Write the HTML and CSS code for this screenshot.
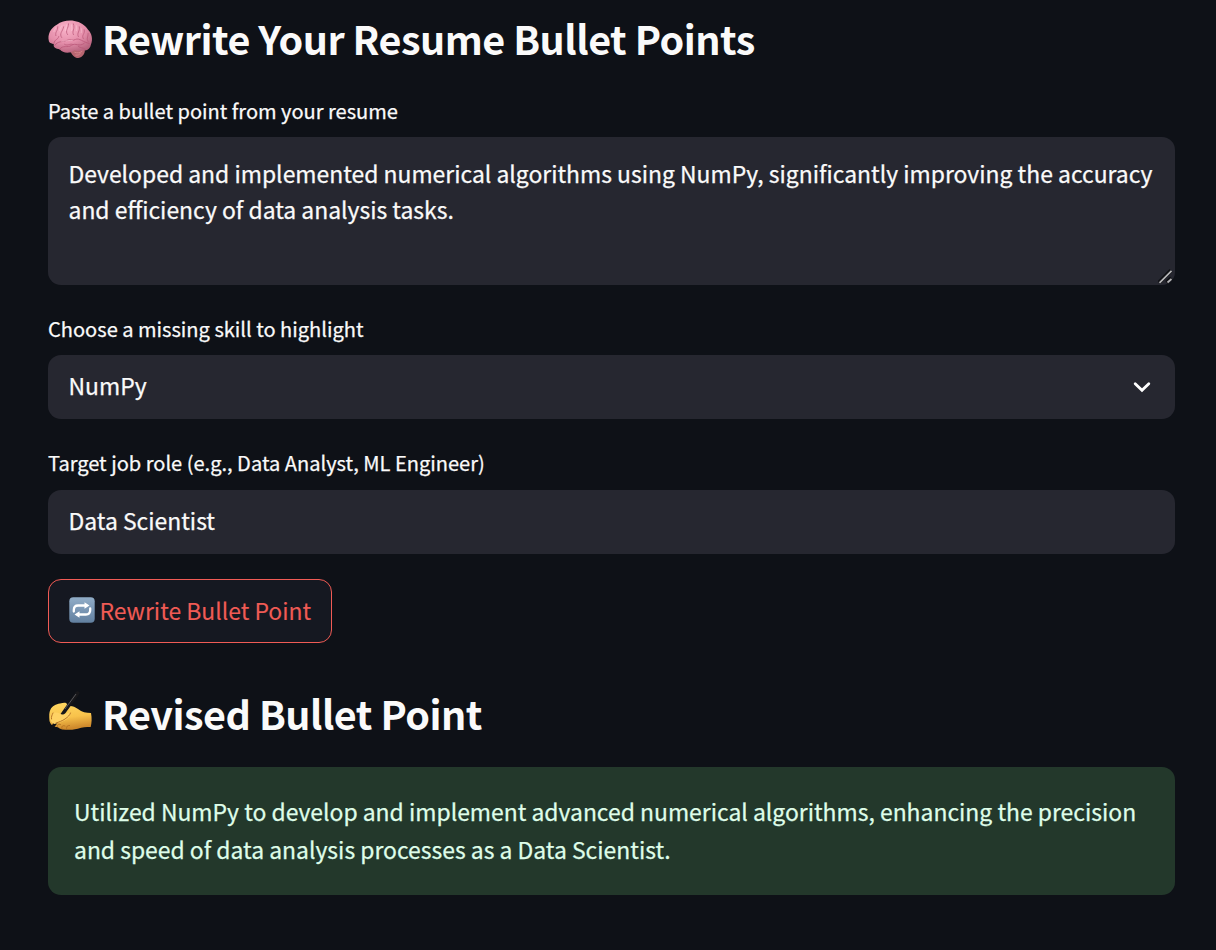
FILE: index.html
```
<!DOCTYPE html>
<html lang="en">
<head>
<meta charset="utf-8">
<title>Rewrite Your Resume Bullet Points</title>
<link rel="stylesheet" href="styles.css">
</head>
<body>
<main class="page">
  <h2 class="heading">
    <svg class="heading-icon" viewBox="0 0 46 46">
      <defs>
        <radialGradient id="brain" cx=".4" cy=".25" r=".8"><stop offset="0" stop-color="#f9b3c9"/><stop offset=".55" stop-color="#e58fab"/><stop offset="1" stop-color="#b4607b"/></radialGradient>
      </defs>
      <g transform="translate(0 1)">
      <path d="M22 34c3-3 9-4 15-2 2 4-1 9-6 10-4 0-7-4-9-8z" fill="#b76570"/>
      <path d="M1 25C-1 18 3 11 9 8c5-4 12-5 18-4 6 1 11 4 14 9 4 4 5 10 3 15-1 5-4 7-8 6-3 1-6 1-9 0-5 4-12 3-15-1-4 0-7-2-6-5-2-1-4-1-5-3z" fill="url(#brain)"/>
      <g fill="none" stroke="#b85577" stroke-width="1" stroke-linecap="round" opacity=".75">
        <path d="M6 27c1-5 4-3 5-7M8 19c-1-4 2-4 2-9M14 21c-3-4 1-6 2-11M20 18c-3-4 1-6 1-11M26 18c-2-4 2-5 0-11M31 20c-2-4 2-5 1-10M36 22c-2-4 2-4 1-9M41 25c-2-3 0-4 0-8"/>
        <path d="M7 29c3-5 8-3 12-5s6 1 9-1c4-2 8 3 14 4M12 33c3-5 8-1 12-4s8 2 13-2M17 28c3 2 5-1 8 0M31 30c2 2 5 1 7 3"/>
      </g>
      <g fill="none" stroke="#ffd0dd" stroke-width=".8" stroke-linecap="round" opacity=".6"><path d="M6 15c0-2 2-3 2-4M12 14c0-2 1-3 2-5M18 14c0-3 1-4 1-6M24 14c1-2 0-4 0-6M29 14c1-2 0-4 0-5M34 16c1-2 0-3 0-4M14 25c4-1 8-1 11-1"/></g>
      <path d="M27 36c3 1 5 1 8-1M28 39c3 0 4 0 5-2" fill="none" stroke="#d98a91" stroke-width=".8"/>
      </g>
    </svg>
    <span class="heading-text">Rewrite Your Resume Bullet Points</span>
  </h2>

  <label class="label">Paste a bullet point from your resume</label>
  <div class="field textarea">
    Developed and implemented numerical algorithms using NumPy, significantly improving the accuracy<br>and efficiency of data analysis tasks.
    <svg class="grip" viewBox="0 0 16 16"><path d="M1 13.500 13 1.500M8.500 13.500 13.500 9" stroke="#101115" stroke-width="4"/><path d="M1.500 13.800 13.500 1.800M9.500 13.500 13.500 10" stroke="#b4b4b6" stroke-width="1.700"/></svg>
  </div>

  <label class="label label-next">Choose a missing skill to highlight</label>
  <div class="field single">
    <span>NumPy</span>
    <svg class="chevron" viewBox="0 0 18 12"><path d="M2.200 2.700 9 9.300l6.800-6.600" fill="none" stroke="#fff" stroke-width="2.800" stroke-linecap="round" stroke-linejoin="miter"/></svg>
  </div>

  <label class="label label-role">Target job role (e.g., Data Analyst, ML Engineer)</label>
  <div class="field single"><span>Data Scientist</span></div>

  <button class="button">
    <svg class="repeat" viewBox="0 0 26 26">
      <defs><linearGradient id="tile" x2="0" y2="1"><stop stop-color="#91adc8"/><stop offset="1" stop-color="#6280a0"/></linearGradient></defs>
      <rect x=".3" y=".3" width="25.400" height="25.400" rx="4" fill="url(#tile)"/>
      <path d="M4.800 14.500v-1.500c0-3 1.500-4.500 4.300-4.500H17M21.200 11.500v1.500c0 3-1.500 4.500-4.300 4.500H9" fill="none" stroke="#fff" stroke-width="2.300" stroke-linecap="round"/>
      <path d="M15.500 5.300v6.400l5-3.200zM10.500 14.300v6.400l-5-3.200z" fill="#fff"/>
    </svg>
    <span class="button-text">Rewrite Bullet Point</span>
  </button>

  <h2 class="heading heading-next">
    <svg class="heading-icon" viewBox="0 0 45 45">
      <defs><linearGradient id="hand" x2=".2" y2="1"><stop stop-color="#ffd863"/><stop offset=".6" stop-color="#f8c24b"/><stop offset="1" stop-color="#cf8a2c"/></linearGradient></defs>
      <path d="M1.500 30C1 25 1 21 2.500 18.500 4 15 8 13 12 12.500c4-1 7-1 7 1l3 1.500c3 0 5 1 8 3 4 3 8 4 13 4 1 5 .8 10-.3 14-5 0-8 0-13 1.700-4 1-7 1-11 1-4 .3-7-.7-9-2.700-4 0-7-2-8.200-6z" fill="url(#hand)"/>
      <path d="m6.500 30-3 5L.3 41l.7.500L6.500 36l3-4z" fill="#121216"/>
      <path d="M27.500 1.500C28.500 0 30 0 31 .8c.8.7.6 1.800-.2 3L17.500 22l-4.500 4-.5-3z" fill="#17171a"/>
      <path d="m28 3-11 15" stroke="#66666a" stroke-width=".8"/>
      <path d="M2.500 25c1-3 3-4 6-3.500 3 0 4 2.500 7 2 3-.5 6-3 7-1.500 1 2-2 5-5 7-4 2-7 3-11 4-3-1-5-4-4-8z" fill="#ffd264"/>
      <path d="M8 32c3-1 6-2 9-4 3-2 5-4 5.500-6M5 22c-1 2-2 4-1.500 6M9.500 36c-1-2 1-3.500 3-2.500M14 38c-1-3 1-4 3-3M18.500 37.500c0-2.500 1-3 3-3" fill="none" stroke="#b97524" stroke-width="1" stroke-linecap="round"/>
    </svg>
    <span class="heading-text">Revised Bullet Point</span>
  </h2>
  <div class="alert">Utilized NumPy to develop and implement advanced numerical algorithms, enhancing the precision<br>and speed of data analysis processes as a Data Scientist.</div>
</main>
</body>
</html>
```
FILE: styles.css
```
* { box-sizing: border-box; }
body { margin: 0; background: #0e1117; color: #fafafa; font-family: "Noto Sans CJK SC", "Noto Sans", sans-serif; -webkit-text-stroke: .25px currentColor; }
.page { height: 950px; padding: 8px 41px 0 48px; overflow: hidden; white-space: nowrap; }
.heading { display: flex; align-items: center; gap: 9px; height: 60px; margin: 0; font-size: 39.5px; line-height: 60px; font-weight: 700; letter-spacing: -.5px; -webkit-text-stroke: 0; }
.heading-icon { width: 45px; height: 45px; flex: none; overflow: visible; }
.label { display: block; height: 28px; margin: 29px 0 12px; font-size: 20.06px; line-height: 28px; }
.label-next { margin: 30px 0 12px; }
.label-role { margin: 30px 0 13px; }
.field { position: relative; background: #262730; border-radius: 13px; font-size: 22.92px; }
.textarea { height: 148px; padding: 18px 20.5px; line-height: 36px; }
.grip { position: absolute; right: 1px; bottom: 0; width: 16px; height: 16px; }
.single { display: flex; align-items: center; justify-content: space-between; height: 64px; padding: 0 24px 4px 20.5px; line-height: 36px; }
.chevron { width: 18px; height: 12px; margin-top: 4px; }
.button { display: flex; align-items: center; gap: 4.5px; width: 284px; height: 64px; margin: 25px 0 0; padding: 0 20px 2px; border: 1px solid #f05b55; border-radius: 13px; background: #151821; color: #f05b55; font: 400 22.92px/36px "Noto Sans CJK SC", sans-serif; white-space: nowrap; -webkit-text-stroke: .1px currentColor; }
.repeat { width: 26px; height: 26px; flex: none; }
.heading-next { margin-top: 40px; }
.alert { height: 128px; margin-top: 24px; padding: 25px 26px; border-radius: 13px; background: #23382b; color: #dffde9; font-size: 22.92px; line-height: 38px; }
```
